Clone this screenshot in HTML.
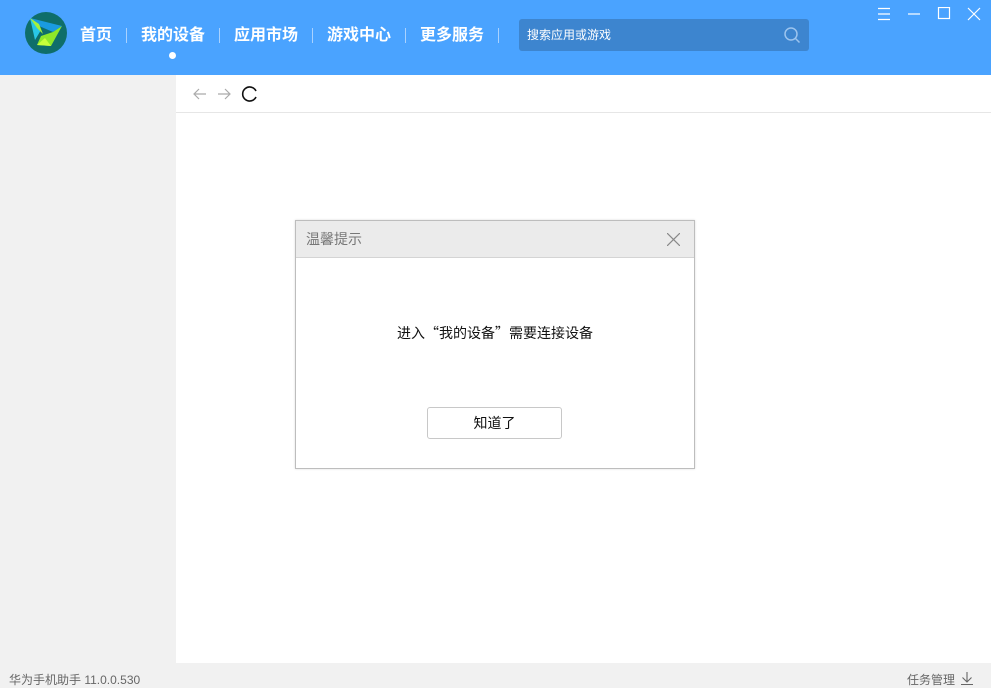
<!DOCTYPE html>
<html><head><meta charset="utf-8"><style>
*{margin:0;padding:0;box-sizing:border-box}
body{width:991px;height:688px;overflow:hidden;background:#f1f1f1;font-family:"Liberation Sans","Noto Sans CJK SC",sans-serif;position:relative}
.top{position:absolute;left:0;top:0;width:991px;height:75px;background:#4aa3ff}
.nav{position:absolute;top:24px;color:#fff;font-size:16px;font-weight:bold;line-height:24px}
.sep{position:absolute;top:28px;width:1px;height:15px;background:#a9d2ff}
.search{position:absolute;left:519px;top:19px;width:290px;height:32px;background:#3d85cf;border-radius:3px;color:#fff;font-size:12px;line-height:32px;padding-left:8px}
.main{position:absolute;left:176px;top:75px;width:815px;height:588px;background:#fff}
.tb{position:absolute;left:0;top:37px;width:815px;height:1px;background:#e6e6e6}
.dlg{position:absolute;left:295px;top:220px;width:400px;height:249px;border:1px solid #bdbdbd;background:#fff;box-shadow:0 0 2px rgba(0,0,0,.15)}
.dh{height:37px;background:#ebebeb;border-bottom:1px solid #d4d4d4;color:#777;font-size:14px;line-height:37px;padding-left:10px}
.msg{position:absolute;top:102px;width:100%;text-align:center;font-size:14px;color:#111}
.q{font-family:"Noto Sans CJK SC",sans-serif}
.btn{position:absolute;left:131px;top:186px;width:135px;height:32px;border:1px solid #c8c8c8;border-radius:3px;text-align:center;line-height:30px;font-size:14px;color:#111}
.foot{position:absolute;top:671px;font-size:12px;color:#666}
</style></head><body>
<div class="top">
<svg style="position:absolute;left:25px;top:12px" width="42" height="42" viewBox="0 0 42 42"><circle cx="21" cy="21" r="21" fill="#0f6e6a"/><polygon points="5,6 37,14 28,20 14,14" fill="#1a9be0"/><polygon points="5,6 16,18 10,28" fill="#29c7e6"/><polygon points="5,6 14,12 18,22 12,16" fill="#a6f03a"/><polygon points="37,14 26,34 12,33 16,24 28,20" fill="#8ee82a"/><polygon points="12,33 20,26 26,34" fill="#c8ff3a"/></svg>
<div class="nav" style="left:80px">首页</div>
<div class="sep" style="left:126px"></div>
<div class="nav" style="left:141px">我的设备</div>
<div style="position:absolute;left:169px;top:52px;width:7px;height:7px;border-radius:50%;background:#fff"></div>
<div class="sep" style="left:219px"></div>
<div class="nav" style="left:234px">应用市场</div>
<div class="sep" style="left:312px"></div>
<div class="nav" style="left:327px">游戏中心</div>
<div class="sep" style="left:405px"></div>
<div class="nav" style="left:420px">更多服务</div>
<div class="sep" style="left:498px"></div>
<div class="search">搜索应用或游戏
<svg style="position:absolute;right:8px;top:7px" width="18" height="18" viewBox="0 0 18 18" fill="none" stroke="#9cc4ee" stroke-width="1.5"><circle cx="8" cy="8" r="6"/><path d="M12.5 12.5L16.5 16.5"/></svg></div>
<svg style="position:absolute;left:877px;top:7px" width="106" height="14" viewBox="0 0 106 14" fill="none" stroke="#fff" stroke-width="1.2"><path d="M1 1.5H13M1 7H13M1 12.5H13"/><path d="M31 7H43"/><rect x="61.5" y="0.5" width="11" height="11"/><path d="M91 1L103 13M103 1L91 13"/></svg>
</div>
<div class="main">
<svg style="position:absolute;left:16px;top:9px" width="70" height="20" viewBox="0 0 70 20" fill="none" stroke-width="1.2"><path d="M14 10H3M7 5L2 10L7 15" stroke="#aaa"/><path d="M26 10H37M33 5L38 10L33 15" stroke="#aaa"/><path d="M64 7A7 7 0 1 0 64 13" stroke="#111" stroke-width="1.6"/></svg>
<div class="tb"></div>
</div>
<div class="dlg">
<div class="dh">温馨提示
<svg style="position:absolute;right:14px;top:12px" width="13" height="13" viewBox="0 0 13 13" stroke="#888" stroke-width="1.2"><path d="M0 0L13 13M13 0L0 13"/></svg></div>
<div class="msg">进入<span class="q">“</span>我的设备<span class="q">”</span>需要连接设备</div>
<div class="btn">知道了</div>
</div>
<div class="foot" style="left:9px">华为手机助手 11.0.0.530</div>
<div class="foot" style="left:907px">任务管理</div>
<svg style="position:absolute;left:961px;top:672px" width="12" height="13" viewBox="0 0 12 13" fill="none" stroke="#666" stroke-width="1.1"><path d="M6 0V10M1.5 5.5L6 10L10.5 5.5M0 12.5H12"/></svg>
</body></html>
